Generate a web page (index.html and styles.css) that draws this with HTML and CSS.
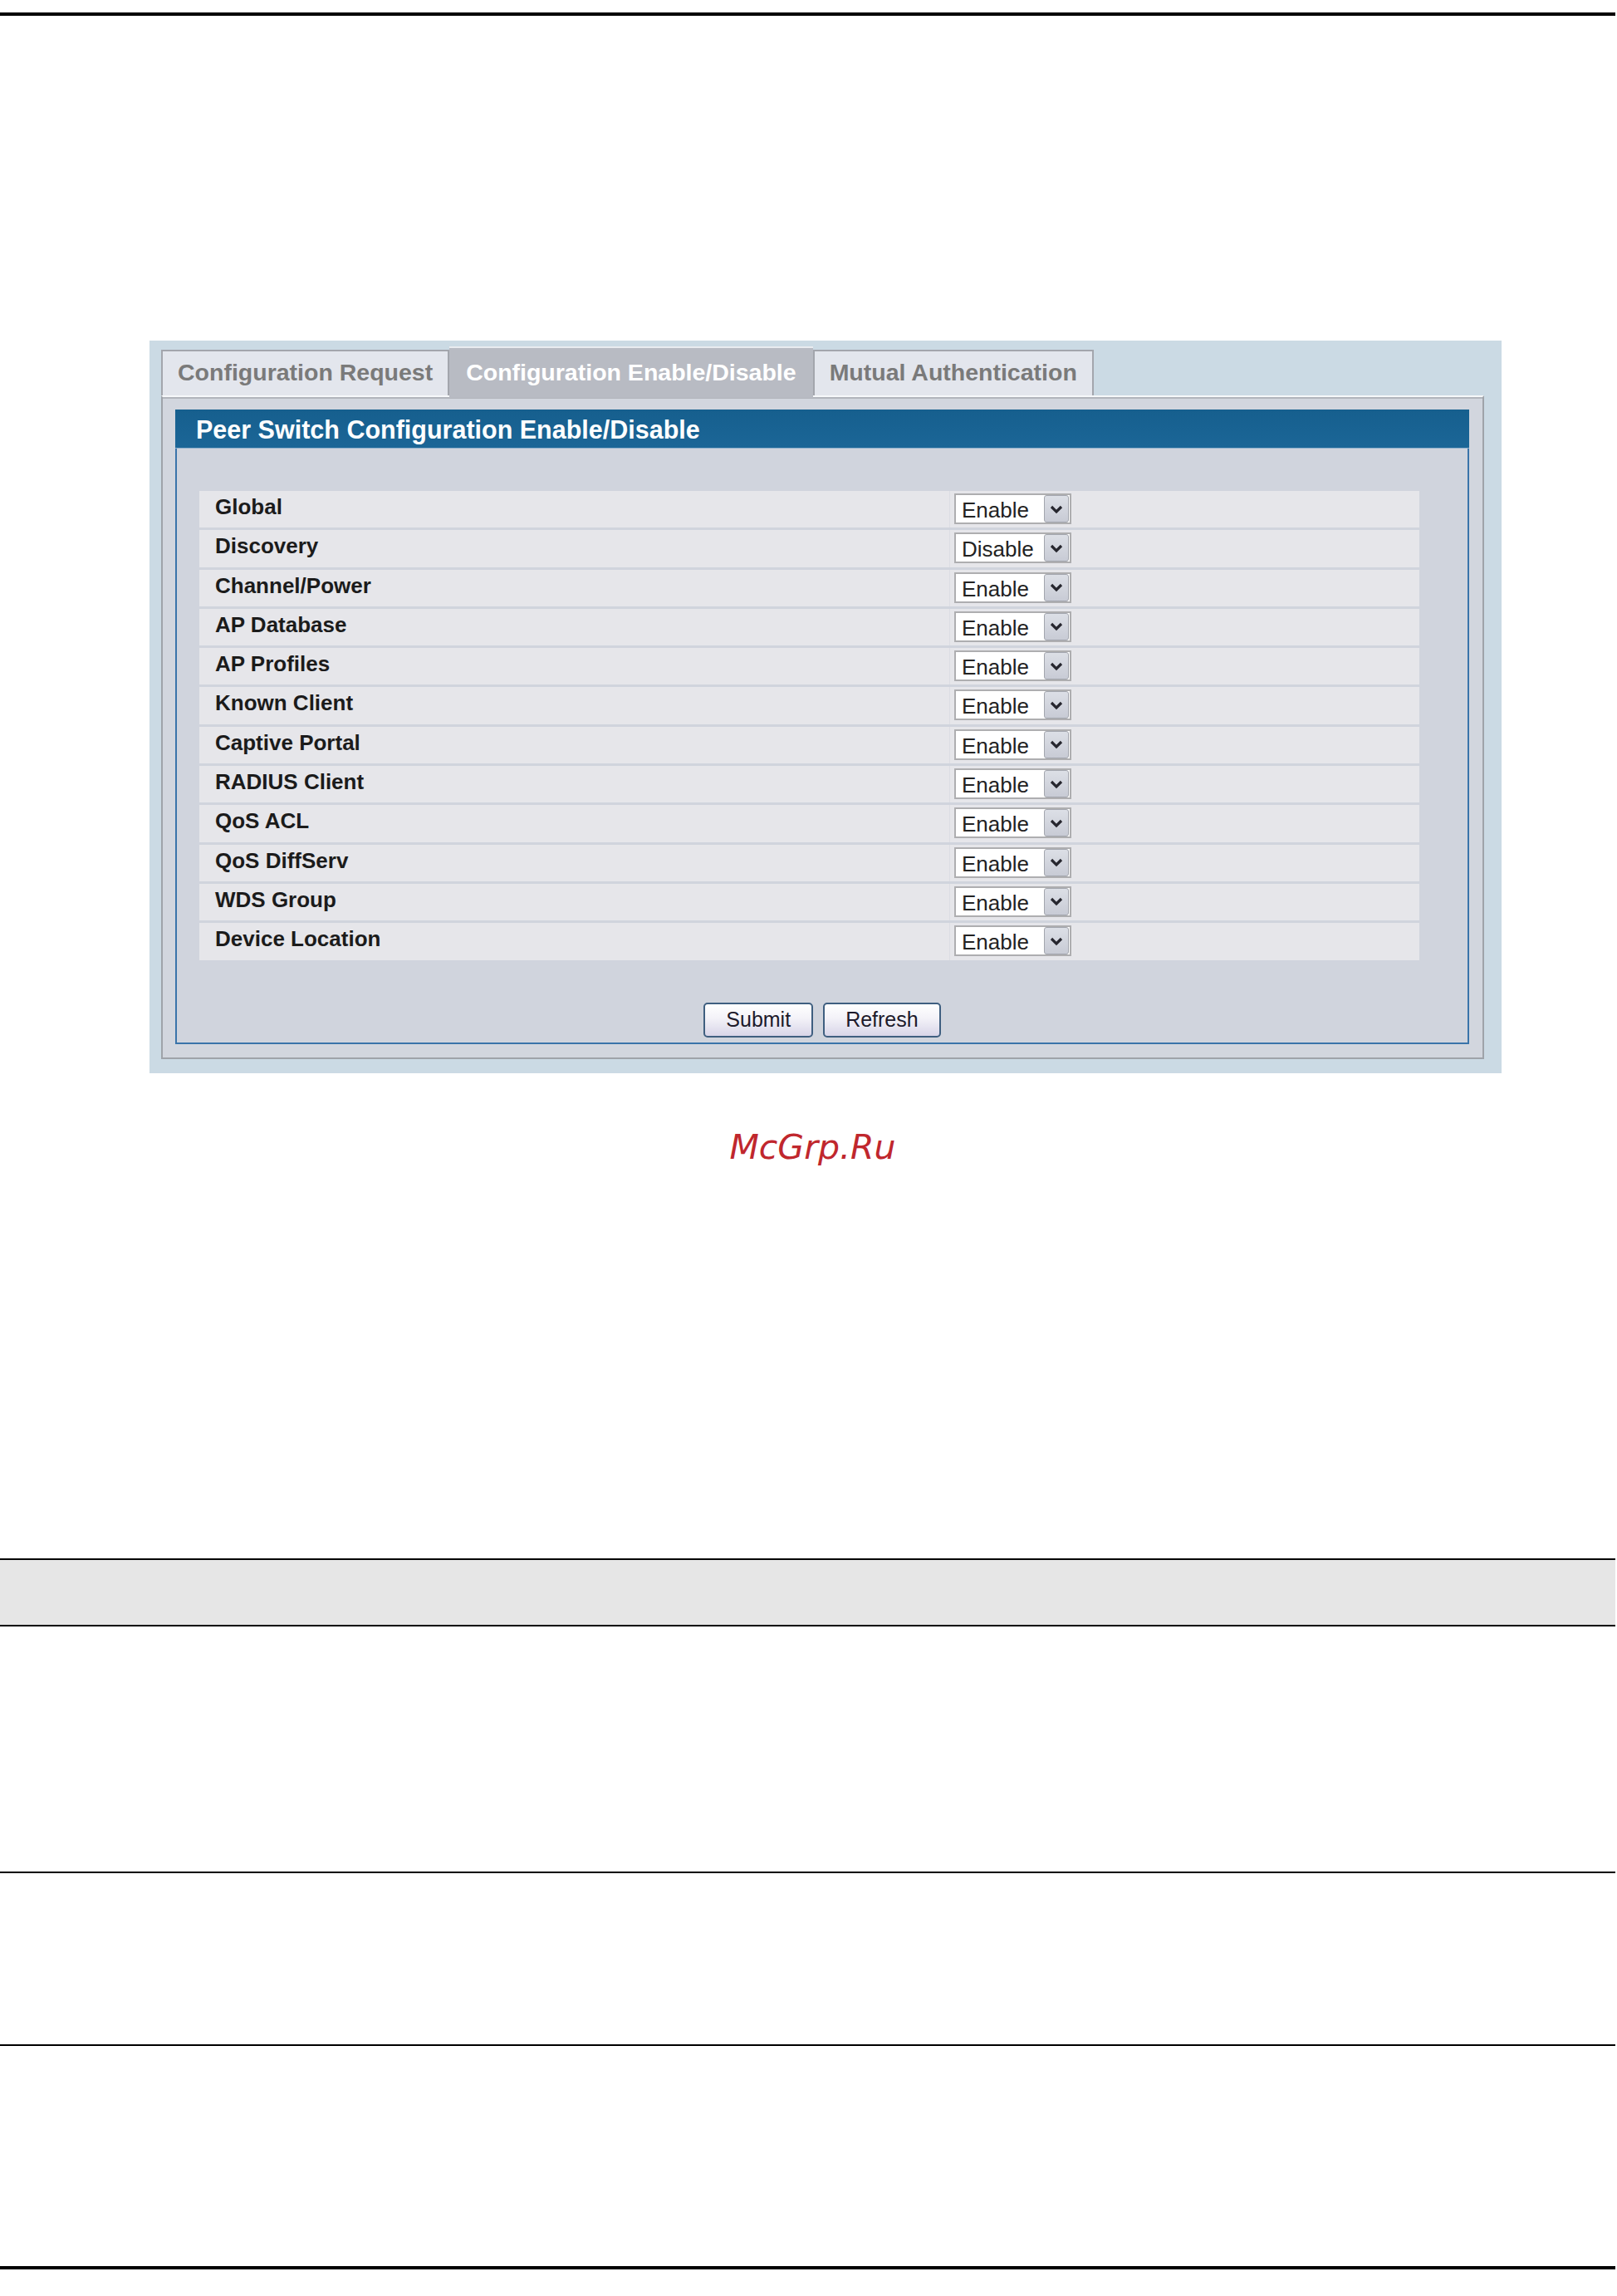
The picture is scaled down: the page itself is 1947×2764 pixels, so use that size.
FILE: index.html
```html
<!DOCTYPE html>
<html lang="en">
<head>
    <meta charset="UTF-8">
    <title>Peer Switch Configuration Enable/Disable</title>
    <link rel="stylesheet" href="styles.css">
</head>
<body>
    <div class="rule rule-top"></div>

    <!-- Экран настройки -->
    <div class="ui">
        <div class="tabs">
            <div class="tab">Configuration Request</div>
            <div class="tab active">Configuration Enable/Disable</div>
            <div class="tab">Mutual Authentication</div>
        </div>
        <div class="panel">
            <div class="frame">
                <div class="frame-title">Peer Switch Configuration Enable/Disable</div>
                <div class="frame-body">
                    <div class="rows">
                        <div class="label">Global</div>
                        <div class="value"><div class="select"><span class="select-text">Enable</span><span class="select-arrow"><svg width="18" height="12" viewBox="0 0 18 12"><polyline points="3,3 9,9 15,3" fill="none" stroke="#26262e" stroke-width="3.2"/></svg></span></div></div>

                        <div class="label">Discovery</div>
                        <div class="value"><div class="select"><span class="select-text">Disable</span><span class="select-arrow"><svg width="18" height="12" viewBox="0 0 18 12"><polyline points="3,3 9,9 15,3" fill="none" stroke="#26262e" stroke-width="3.2"/></svg></span></div></div>

                        <div class="label">Channel/Power</div>
                        <div class="value"><div class="select"><span class="select-text">Enable</span><span class="select-arrow"><svg width="18" height="12" viewBox="0 0 18 12"><polyline points="3,3 9,9 15,3" fill="none" stroke="#26262e" stroke-width="3.2"/></svg></span></div></div>

                        <div class="label">AP Database</div>
                        <div class="value"><div class="select"><span class="select-text">Enable</span><span class="select-arrow"><svg width="18" height="12" viewBox="0 0 18 12"><polyline points="3,3 9,9 15,3" fill="none" stroke="#26262e" stroke-width="3.2"/></svg></span></div></div>

                        <div class="label">AP Profiles</div>
                        <div class="value"><div class="select"><span class="select-text">Enable</span><span class="select-arrow"><svg width="18" height="12" viewBox="0 0 18 12"><polyline points="3,3 9,9 15,3" fill="none" stroke="#26262e" stroke-width="3.2"/></svg></span></div></div>

                        <div class="label">Known Client</div>
                        <div class="value"><div class="select"><span class="select-text">Enable</span><span class="select-arrow"><svg width="18" height="12" viewBox="0 0 18 12"><polyline points="3,3 9,9 15,3" fill="none" stroke="#26262e" stroke-width="3.2"/></svg></span></div></div>

                        <div class="label">Captive Portal</div>
                        <div class="value"><div class="select"><span class="select-text">Enable</span><span class="select-arrow"><svg width="18" height="12" viewBox="0 0 18 12"><polyline points="3,3 9,9 15,3" fill="none" stroke="#26262e" stroke-width="3.2"/></svg></span></div></div>

                        <div class="label">RADIUS Client</div>
                        <div class="value"><div class="select"><span class="select-text">Enable</span><span class="select-arrow"><svg width="18" height="12" viewBox="0 0 18 12"><polyline points="3,3 9,9 15,3" fill="none" stroke="#26262e" stroke-width="3.2"/></svg></span></div></div>

                        <div class="label">QoS ACL</div>
                        <div class="value"><div class="select"><span class="select-text">Enable</span><span class="select-arrow"><svg width="18" height="12" viewBox="0 0 18 12"><polyline points="3,3 9,9 15,3" fill="none" stroke="#26262e" stroke-width="3.2"/></svg></span></div></div>

                        <div class="label">QoS DiffServ</div>
                        <div class="value"><div class="select"><span class="select-text">Enable</span><span class="select-arrow"><svg width="18" height="12" viewBox="0 0 18 12"><polyline points="3,3 9,9 15,3" fill="none" stroke="#26262e" stroke-width="3.2"/></svg></span></div></div>

                        <div class="label">WDS Group</div>
                        <div class="value"><div class="select"><span class="select-text">Enable</span><span class="select-arrow"><svg width="18" height="12" viewBox="0 0 18 12"><polyline points="3,3 9,9 15,3" fill="none" stroke="#26262e" stroke-width="3.2"/></svg></span></div></div>

                        <div class="label">Device Location</div>
                        <div class="value"><div class="select"><span class="select-text">Enable</span><span class="select-arrow"><svg width="18" height="12" viewBox="0 0 18 12"><polyline points="3,3 9,9 15,3" fill="none" stroke="#26262e" stroke-width="3.2"/></svg></span></div></div>
                    </div>
                    <div class="actions">
                        <button class="btn">Submit</button>
                        <button class="btn">Refresh</button>
                    </div>
                </div>
            </div>
        </div>
    </div>

    <p class="watermark">McGrp.Ru</p>

    <!-- Таблица документа -->
    <div class="doc-band"></div>
    <div class="rule rule-thin rule-a"></div>
    <div class="rule rule-thin rule-b"></div>
    <div class="rule rule-bottom"></div>
</body>
</html>
```

FILE: styles.css
```css
body {
    margin: 0;
    background: #fff;
    font-family: "Liberation Sans", Arial, sans-serif;
}

.rule {
    width: 1945px;
    background: #000;
}

.rule-top {
    margin-top: 15px;
    height: 4px;
}

.ui {
    box-sizing: border-box;
    width: 1628px;
    margin: 391px 0 0 180px;
    padding: 7px 21px 17px 14px;
    background: #cbdae4;
}

/* Вкладки */
.tabs {
    display: flex;
    align-items: flex-end;
    height: 59px;
    position: relative;
    z-index: 1;
}

.tab {
    border: 2px solid #a3a6ad;
    border-bottom: none;
    background: #e3e6ed;
    color: #7a7a7a;
    font-weight: bold;
    font-size: 28.5px;
    line-height: 32px;
    padding: 9px 18px 12px;
    white-space: nowrap;
}

.tab.active {
    background: #b8bbc3;
    color: #fff;
    border-left: none;
    border-right: none;
    border-top: 2px solid #e9ebef;
    padding: 13px 20px 15px;
    margin-bottom: -3px;
}

.panel {
    border: 2px solid #9fa3a9;
    border-top-color: #f6f8fa;
    box-shadow: inset 0 2px 0 #b2b5bc;
    background: #d2d6de;
    padding: 15px 16px 16px 15px;
}

.frame-title {
    height: 47px;
    box-sizing: border-box;
    padding: 2px 0 0 25px;
    line-height: 44px;
    font-size: 30.5px;
    font-weight: bold;
    color: #fff;
    background: linear-gradient(#165f8e, #1b6697);
    border-bottom: 1px solid #8fb0cc;
}

.frame-body {
    border: 2px solid #3a74aa;
    border-top: none;
    background: #d0d4dd;
    padding: 51px 58px 6px 27px;
}

.rows {
    display: grid;
    grid-template-columns: 904px 1fr;
    grid-auto-rows: 44.3px;
    row-gap: 3px;
}

.label {
    background: #e6e6ea;
    border-right: 1px solid #dcdde3;
    padding: 4px 0 0 19px;
    font-size: 26px;
    line-height: 30px;
    font-weight: bold;
    color: #1b1b1b;
}

.value {
    background: #e6e6ea;
    padding: 3px 0 0 5px;
}

/* Выпадающий список */
.select {
    box-sizing: border-box;
    width: 141px;
    height: 37px;
    display: flex;
    align-items: stretch;
    background: #fff;
    border: 2px solid #aeaeb0;
}

.select-text {
    flex: 1;
    padding: 2px 0 0 7px;
    font-size: 26px;
    line-height: 32px;
    color: #222;
}

.select-arrow {
    width: 28px;
    margin: 0 1px 0 0;
    display: flex;
    align-items: center;
    justify-content: center;
    background: linear-gradient(#dcdfe6, #c8cbd5);
    border: 1px solid #a3a6ae;
    border-radius: 3px;
}

.actions {
    display: flex;
    justify-content: center;
    gap: 12px;
    margin: 51px -31px 0 0;
}

.btn {
    height: 42px;
    padding: 0 25px;
    font-family: "Liberation Sans", Arial, sans-serif;
    font-size: 25px;
    color: #1d1a2b;
    border: 2px solid #3f5f80;
    border-radius: 5px;
    background: linear-gradient(#ffffff, #f3f2f8 45%, #d8d5e8);
}

.watermark {
    margin: 65px 0 0;
    padding-left: 10px;
    text-align: center;
    font-family: "DejaVu Sans", sans-serif;
    font-style: oblique;
    font-size: 41px;
    line-height: 48px;
    color: #c0272d;
}

.doc-band {
    width: 1945px;
    height: 78px;
    margin-top: 471px;
    background: #e6e6e6;
    border-top: 2px solid #000;
    border-bottom: 2px solid #000;
}

.rule-thin {
    height: 2px;
}

.rule-a {
    margin-top: 295px;
}

.rule-b {
    margin-top: 206px;
}

.rule-bottom {
    height: 4px;
    margin-top: 265px;
}
```
